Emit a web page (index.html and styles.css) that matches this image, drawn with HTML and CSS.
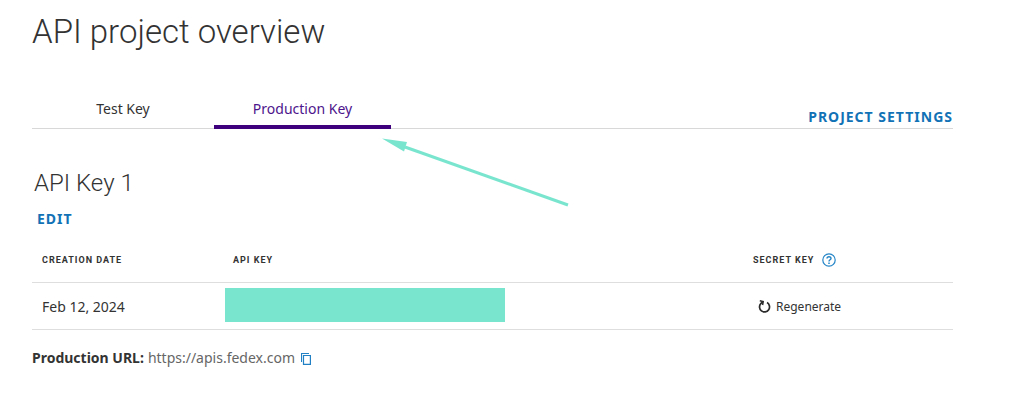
FILE: index.html
```html
<!DOCTYPE html>
<html lang="en">
<head>
    <meta charset="UTF-8">
    <meta name="viewport" content="width=device-width, initial-scale=1.0">
    <title>API project overview</title>
    <link rel="stylesheet" href="styles.css">
</head>
<body>
    <main class="project">
        <h1>API project overview</h1>
        <div class="tab-bar">
            <div class="tabs" role="tablist">
                <button type="button" class="tab" role="tab" aria-selected="false">Test Key</button>
                <button type="button" class="tab active" role="tab" aria-selected="true">Production Key</button>
            </div>
            <a href="#settings" class="action settings">PROJECT SETTINGS</a>
            <!-- arrow pointing at the production tab -->
            <svg class="arrow" width="190" height="72" viewBox="0 0 190 72" aria-hidden="true">
                <path d="M23 9L186 67" fill="none" stroke="#7ae5cf" stroke-width="3"/>
                <path d="M0 .5L25 4L22 13.5Z" fill="#7ae5cf"/>
            </svg>
        </div>

        <h2>API Key 1</h2>
        <a href="#edit" class="action edit">EDIT</a>

        <table class="keys">
            <thead>
                <tr>
                    <th class="col-date">CREATION DATE</th>
                    <th class="col-key">API KEY</th>
                    <th class="col-secret">
                        <div class="secret-head">
                            SECRET KEY
                            <button type="button" class="icon-button" aria-label="Help">
                                <svg width="14" height="14" viewBox="0 0 14 14" fill="none" stroke="#2585c7">
                                    <circle cx="7" cy="7" r="6.2" stroke-width="1.2"/>
                                    <path d="M5 5.6C5 3.2 9 3.2 9 5.4C9 6.8 7 6.7 7 8.4" stroke-width="1.4"/>
                                    <path d="M7 9.4V10.9" stroke-width="1.5"/>
                                </svg>
                            </button>
                        </div>
                    </th>
                </tr>
            </thead>
            <tbody>
                <tr>
                    <td>Feb 12, 2024</td>
                    <td class="key"><div class="redacted"></div></td>
                    <td>
                        <button type="button" class="regenerate">
                            <svg width="13" height="14" viewBox="0 0 13 14" fill="none" stroke="#2b2b2b">
                                <path d="M9 2.6A5 5 0 1 1 2.8 3.6L4.6 2" stroke-width="1.7"/>
                                <path d="M1.8 .8L5.2 1.6L4.6 5" stroke-width="1.5"/>
                            </svg>
                            Regenerate
                        </button>
                    </td>
                </tr>
            </tbody>
        </table>

        <div class="production-url">
            <strong>Production URL:</strong>
            <span>https://apis.fedex.com</span>
            <button type="button" class="icon-button" aria-label="Copy URL">
                <svg width="10" height="12" viewBox="0 0 10 12" fill="none" stroke="#2080c3">
                    <path d="M.5 9V.5H8" stroke-width="1.2"/>
                    <path d="M2.5 2.5H9.4V11.4H2.5Z" stroke-width="1.2"/>
                </svg>
            </button>
        </div>
    </main>
</body>
</html>
```
FILE: styles.css
```css
body {
    margin: 0;
    background: #fff;
    color: #333;
    font-family: "Noto Sans", sans-serif;
    font-size: 14px;
}
button {
    padding: 0;
    border: none;
    background: none;
    color: inherit;
    font: inherit;
    cursor: pointer;
}
svg {
    display: block;
}
.project {
    padding: 12px 71px 24px 32px;
}
h1 {
    margin: 0;
    font-family: Roboto, sans-serif;
    font-size: 33px;
    font-weight: 300;
    line-height: 40px;
}
h2 {
    margin: 38px 0 0 2px;
    font-family: Roboto, sans-serif;
    font-size: 24px;
    font-weight: 300;
    line-height: 32px;
}

/* tabs */
.tab-bar {
    position: relative;
    display: flex;
    justify-content: space-between;
    align-items: flex-end;
    margin-top: 38px;
    border-bottom: 1px solid #d8d8d8;
}
.tabs {
    display: flex;
    margin-bottom: -1px;
}
.tab {
    width: 182px;
    height: 39px;
    padding-top: 2px;
    border-bottom: 4px solid transparent;
}
.tab.active {
    width: 177px;
    border-bottom-color: #3f007d;
    color: #4d148c;
}
.arrow {
    position: absolute;
    top: 48px;
    left: 350px;
}

.action {
    color: #1272b6;
    font-weight: 700;
    letter-spacing: 1px;
    line-height: 20px;
    text-decoration: none;
}
.settings {
    margin-bottom: 1px;
}
.edit {
    display: inline-block;
    margin: 10px 0 0 5px;
}

/* keys table */
.keys {
    width: 100%;
    margin-top: 9px;
    border-collapse: collapse;
    table-layout: fixed;
}
.keys th,
.keys td {
    padding: 0 0 0 10px;
    border-bottom: 1px solid #dedede;
    text-align: left;
}
.keys th {
    height: 44px;
    font-family: Roboto, sans-serif;
    font-size: 9px;
    font-weight: 700;
    letter-spacing: 1px;
}
.keys td {
    height: 45px;
    padding-top: 1px;
}
.keys .col-date {
    width: 183px;
}
.keys .col-key {
    padding-left: 8px;
}
.keys .col-secret {
    width: 200px;
    padding-left: 0;
}
.keys .key {
    padding: 0;
}
.secret-head {
    display: flex;
    align-items: center;
    gap: 8px;
}
.redacted {
    width: 280px;
    height: 34px;
    margin-bottom: 2px;
    background: #7ae5cf;
}
.keys td:last-child {
    padding-left: 5px;
}
.regenerate {
    display: flex;
    align-items: center;
    gap: 5px;
    font-size: 12px;
}

.production-url {
    display: flex;
    align-items: center;
    gap: 4px;
    margin-top: 18px;
    line-height: 20px;
}
.production-url span {
    color: #666;
}
.production-url .icon-button {
    margin: 2px 0 0 2px;
}
```
